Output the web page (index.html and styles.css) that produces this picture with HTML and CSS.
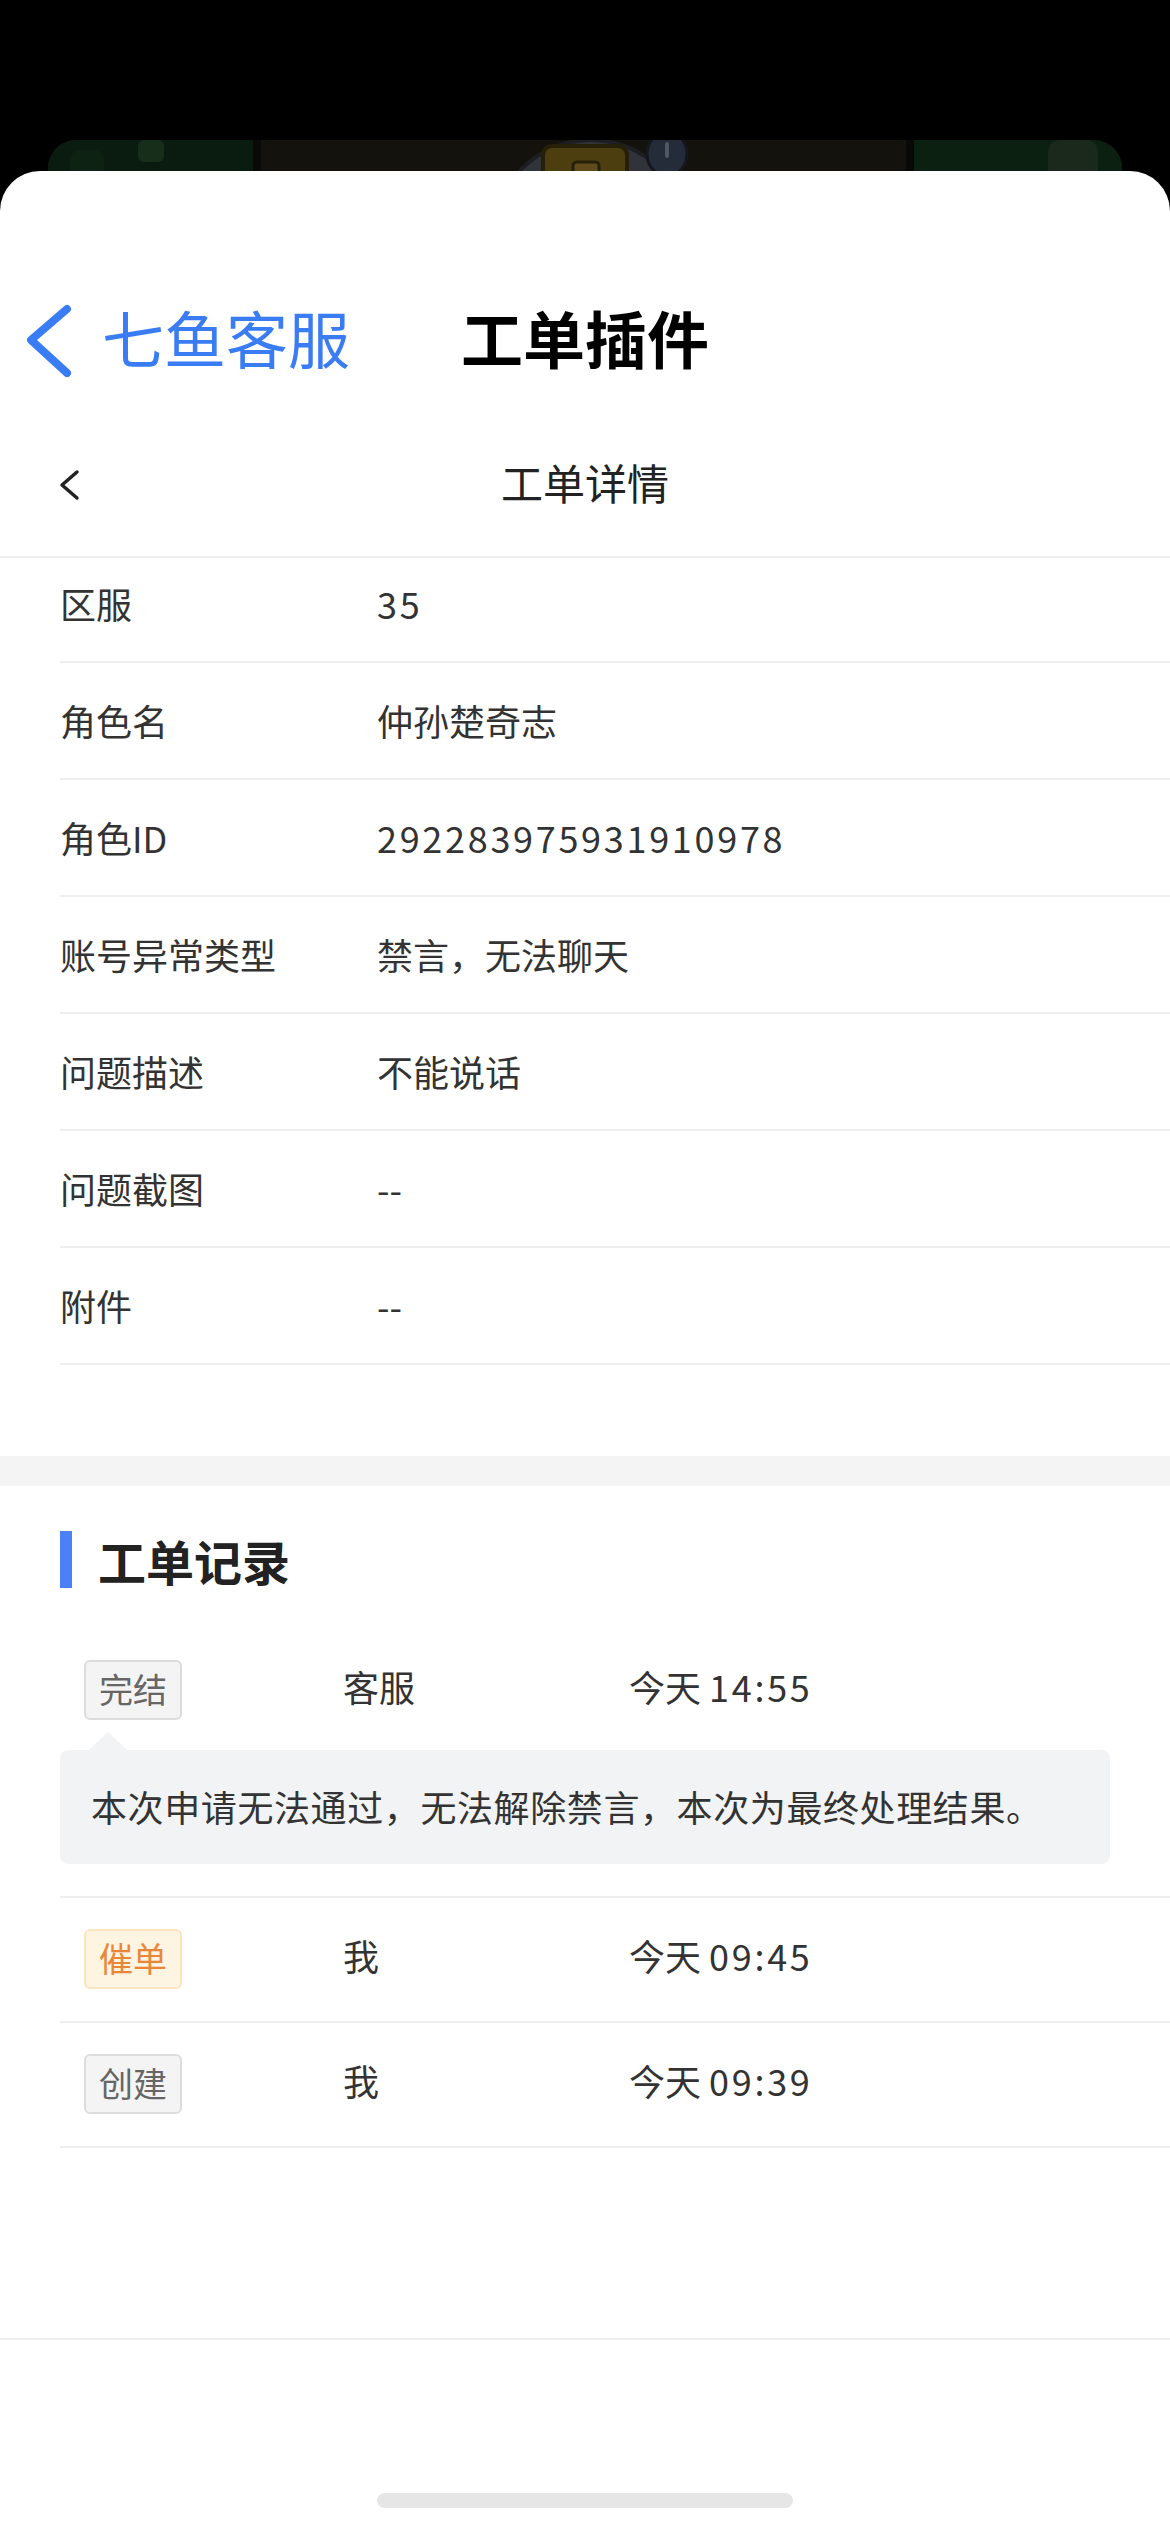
FILE: index.html
```html
<!DOCTYPE html>
<html lang="zh-CN">
<head>
    <meta charset="UTF-8">
    <meta name="viewport" content="width=device-width, initial-scale=1.0">
    <title>工单详情</title>
    <link rel="stylesheet" href="styles.css">
</head>
<body>

    <!-- 后面露出的游戏画面 -->
    <div class="game-peek">
        <svg width="1074" height="80" viewBox="0 0 1074 80">
            <rect width="1074" height="80" fill="#13120d"/>
            <rect x="0" y="0" width="205" height="80" fill="#0a1b0f"/>
            <rect x="22" y="10" width="34" height="70" rx="10" fill="#0e2214"/>
            <rect x="90" y="0" width="26" height="22" rx="6" fill="#172e1b"/>
            <rect x="205" y="0" width="8" height="80" fill="#090907"/>
            <rect x="866" y="0" width="208" height="80" fill="#0b2011"/>
            <rect x="858" y="0" width="8" height="80" fill="#090907"/>
            <circle cx="930" cy="60" r="26" fill="#16261a"/>
            <rect x="1000" y="0" width="50" height="40" rx="12" fill="#1b291c"/>
            <circle cx="543" cy="98" r="98" fill="#30333a" stroke="#1c1e22" stroke-width="4"/>
            <rect x="495" y="6" width="84" height="70" rx="9" fill="#4d3e10" stroke="#262008" stroke-width="4"/>
            <rect x="525" y="22" width="26" height="20" rx="4" fill="#5f4b1c" stroke="#262008" stroke-width="3"/>
            <ellipse cx="619" cy="14" rx="20" ry="22" fill="#252c39" stroke="#14171e" stroke-width="3"/>
            <rect x="617" y="2" width="4" height="16" rx="2" fill="#4f5766"/>
        </svg>
    </div>

    <div class="sheet">

        <!-- 宿主导航 -->
        <div class="host-nav">
            <a class="host-back">
                <svg width="46" height="74" viewBox="0 0 46 74">
                    <polyline points="40,5 4,36 40,69" fill="none" stroke="#3a7cf3" stroke-width="8" stroke-linecap="round" stroke-linejoin="round"/>
                </svg>
                <span>七鱼客服</span>
            </a>
            <div class="host-title">工单插件</div>
            <div></div>
        </div>

        <!-- 页面标题 -->
        <header class="page-header">
            <svg class="page-back" width="22" height="32" viewBox="0 0 22 32">
                <polyline points="18,3 3,16 18,29" fill="none" stroke="#222" stroke-width="3.5" stroke-linecap="round" stroke-linejoin="round"/>
            </svg>
            <h1 class="page-title">工单详情</h1>
            <div></div>
        </header>

        <!-- 工单字段 -->
        <div class="detail-scroll">
            <dl class="detail-list">
                <div class="detail-row"><dt>区服</dt><dd class="num">35</dd></div>
                <div class="detail-row"><dt>角色名</dt><dd>仲孙楚奇志</dd></div>
                <div class="detail-row"><dt>角色ID</dt><dd class="num">292283975931910978</dd></div>
                <div class="detail-row"><dt>账号异常类型</dt><dd>禁言，无法聊天</dd></div>
                <div class="detail-row"><dt>问题描述</dt><dd>不能说话</dd></div>
                <div class="detail-row"><dt>问题截图</dt><dd>--</dd></div>
                <div class="detail-row"><dt>附件</dt><dd>--</dd></div>
            </dl>
        </div>

        <div class="gap-band"></div>

        <!-- 工单记录 -->
        <section class="records">
            <h2 class="records-title">工单记录</h2>
            <ul class="record-list">
                <li class="record">
                    <div class="record-main">
                        <span class="tag tag-gray">完结</span>
                        <span class="record-cell">客服</span>
                        <span class="record-cell">今天 <span class="num">14:55</span></span>
                    </div>
                    <div class="record-note">本次申请无法通过，无法解除禁言，本次为最终处理结果。</div>
                </li>
                <li class="record">
                    <div class="record-main">
                        <span class="tag tag-orange">催单</span>
                        <span class="record-cell">我</span>
                        <span class="record-cell">今天 <span class="num">09:45</span></span>
                    </div>
                </li>
                <li class="record">
                    <div class="record-main">
                        <span class="tag tag-gray">创建</span>
                        <span class="record-cell">我</span>
                        <span class="record-cell">今天 <span class="num">09:39</span></span>
                    </div>
                </li>
            </ul>
        </section>

        <div class="bottom-bar">
            <div class="home-indicator"></div>
        </div>
    </div>

</body>
</html>
```

FILE: styles.css
```css
/* 基础 */
* {
    box-sizing: border-box;
}

body {
    margin: 0;
    width: 1170px;
    height: 2532px;
    overflow: hidden;
    background-color: #000;
    font-family: "Noto Sans CJK SC", "Noto Sans", sans-serif;
    color: #333;
}

/* 弹层后面的游戏画面 */
.game-peek {
    margin: 140px 48px 0;
    height: 80px;
    border-radius: 28px 28px 0 0;
    overflow: hidden;
}

.game-peek svg {
    display: block;
}

/* 白色弹层 */
.sheet {
    position: relative;
    z-index: 1;
    margin-top: -49px;
    height: 2361px;
    background-color: #fff;
    border-radius: 40px 40px 0 0;
    padding-top: 103px;
    display: flex;
    flex-direction: column;
}

/* 宿主导航 */
.host-nav {
    height: 126px;
    display: grid;
    grid-template-columns: 1fr auto 1fr;
    align-items: center;
}

.host-back {
    display: flex;
    align-items: center;
    gap: 29px;
    padding-left: 27px;
    color: #3a7cf3;
    font-size: 62px;
    line-height: 74px;
}

.host-back svg {
    display: block;
    margin-top: 8px;
}

.host-title {
    font-size: 62px;
    font-weight: bold;
    color: #000;
    line-height: 74px;
}

/* 页面标题栏 */
.page-header {
    height: 158px;
    padding-top: 6px;
    display: grid;
    grid-template-columns: 1fr auto 1fr;
    align-items: center;
    border-bottom: 2px solid #eeeeee;
}

.page-back {
    display: block;
    margin-left: 59px;
    margin-top: 8px;
}

.page-title {
    margin: 0;
    font-size: 42px;
    font-weight: normal;
    color: #222;
}

/* 字段列表 */
.detail-scroll {
    overflow: hidden;
    padding-bottom: 91px;
}

.detail-list {
    margin: -12px 0 0 60px;
}

.detail-row {
    display: grid;
    grid-template-columns: 317px 1fr;
    height: 117px;
    border-bottom: 2px solid #eeeeee;
    font-size: 36px;
    line-height: 115px;
}

.detail-row dt,
.detail-row dd {
    margin: 0;
    color: #333;
}

.num {
    letter-spacing: 2.7px;
}

.gap-band {
    height: 30px;
    background-color: #f4f4f4;
}

/* 工单记录 */
.records {
    padding-top: 45px;
}

.records-title {
    display: flex;
    align-items: center;
    gap: 26px;
    margin: 0 0 41px 60px;
    height: 57px;
    font-size: 48px;
    font-weight: bold;
    color: #222;
}

.records-title::before {
    content: "";
    width: 12px;
    height: 57px;
    background-color: #4c80f6;
}

.record-list {
    list-style: none;
    margin: 0 0 0 60px;
    padding: 0;
}

.record {
    padding: 31px 0 32px;
    border-bottom: 2px solid #eeeeee;
}

.record-main {
    display: grid;
    grid-template-columns: 283px 286px 1fr;
    align-items: center;
    height: 60px;
    font-size: 36px;
    color: #333;
}

.record-cell {
    align-self: start;
    line-height: 52px;
}

.tag {
    justify-self: start;
    margin-left: 24px;
    height: 60px;
    padding: 0 13px;
    border: 2px solid;
    border-radius: 6px;
    font-size: 34px;
    line-height: 54px;
}

.tag-gray {
    background-color: #f4f4f4;
    border-color: #dcdcdc;
    color: #666;
}

.tag-orange {
    background-color: #fdf4e1;
    border-color: #fbe5bf;
    color: #e8873a;
}

/* 处理备注 */
.record-note {
    position: relative;
    width: 1050px;
    margin-top: 30px;
    padding-left: 31px;
    height: 114px;
    line-height: 112px;
    background-color: #f2f3f5;
    border-radius: 8px;
    font-size: 36px;
    letter-spacing: 0.6px;
    color: #333;
}

.record-note::before {
    content: "";
    position: absolute;
    top: -18px;
    left: 29px;
    border-left: 19px solid transparent;
    border-right: 19px solid transparent;
    border-bottom: 18px solid #f2f3f5;
}

/* 底部 */
.bottom-bar {
    margin-top: auto;
    height: 194px;
    border-top: 2px solid #eeeeee;
    padding-top: 153px;
}

.home-indicator {
    width: 416px;
    height: 15px;
    margin: 0 auto;
    border-radius: 8px;
    background-color: #e6e6e6;
}
```
